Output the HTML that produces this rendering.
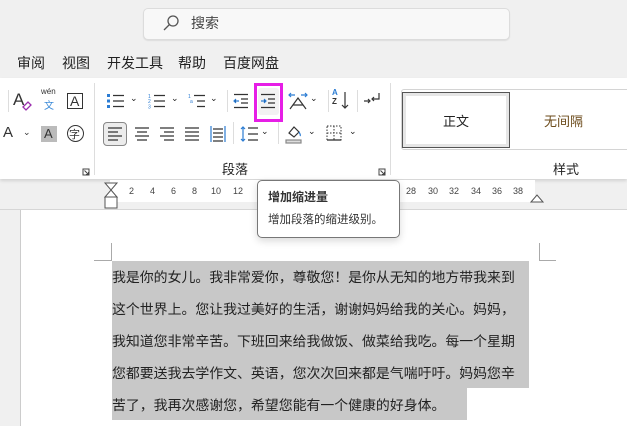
<!DOCTYPE html>
<html><head><meta charset="utf-8"><style>
*{margin:0;padding:0;box-sizing:border-box}
body{width:627px;height:426px;overflow:hidden;background:#f0f0f0;font-family:"Liberation Sans","Noto Sans CJK SC",sans-serif;position:relative;color:#222}
.a{position:absolute}
.t{font-size:13px;white-space:nowrap}
svg{position:absolute;overflow:visible}
</style></head><body>
<!-- search -->
<div class="a" style="left:143px;top:8px;width:367px;height:32px;background:#f8f8f8;border:1px solid #dcdcdc;border-radius:5px;box-shadow:0 1px 1px #ddd"></div>
<svg style="left:163px;top:14px" width="18" height="18"><circle cx="10" cy="7" r="5" fill="none" stroke="#555" stroke-width="1.3"/><line x1="6.5" y1="10.5" x2="1" y2="16" stroke="#555" stroke-width="1.3"/></svg>
<div class="a t" style="left:191px;top:13px;font-size:14px;color:#444">搜索</div>
<!-- menu -->
<div class="a t" style="left:17px;top:53px;font-size:14px">审阅</div>
<div class="a t" style="left:62px;top:53px;font-size:14px">视图</div>
<div class="a t" style="left:107px;top:53px;font-size:14px">开发工具</div>
<div class="a t" style="left:178px;top:53px;font-size:14px">帮助</div>
<div class="a t" style="left:223px;top:53px;font-size:14px">百度网盘</div>
<!-- ribbon -->
<div class="a" style="left:0;top:78px;width:627px;height:101px;background:#fff;box-shadow:0 2px 3px rgba(0,0,0,.12)"></div>
<div class="a" style="left:94px;top:83px;width:1px;height:92px;background:#ddd"></div>
<div class="a" style="left:390px;top:83px;width:1px;height:92px;background:#ddd"></div>
<div class="a" style="left:8px;top:90px;width:1px;height:22px;background:#ddd"></div>
<div class="a" style="left:227px;top:90px;width:1px;height:22px;background:#ddd"></div>
<div class="a" style="left:328px;top:90px;width:1px;height:22px;background:#ddd"></div>
<div class="a" style="left:357px;top:90px;width:1px;height:22px;background:#ddd"></div>
<div class="a" style="left:233px;top:122px;width:1px;height:22px;background:#ddd"></div>
<div class="a" style="left:278px;top:122px;width:1px;height:22px;background:#ddd"></div>
<!-- row1 left -->
<div class="a t" style="left:13px;top:90px;font-size:17px;color:#333">A</div>
<svg style="left:22px;top:100px" width="10" height="10"><path d="M1 7l5-5 3 3-5 5z" fill="none" stroke="#9b2fae" stroke-width="1.3"/></svg>
<div class="a t" style="left:41px;top:87px;font-size:8px;color:#333">wén</div>
<div class="a t" style="left:44px;top:97px;font-size:10px;color:#3b8ad8">文</div>
<div class="a" style="left:67px;top:93px;width:16px;height:16px;border:1px solid #333"></div>
<div class="a t" style="left:70px;top:93px;font-size:14px;color:#333">A</div>
<!-- row2 left -->
<div class="a t" style="left:3px;top:124px;font-size:15px;color:#333">A</div>
<div class="a t" style="left:23px;top:127px;font-size:9px;color:#333">⌄</div>
<div class="a" style="left:41px;top:126px;width:16px;height:16px;background:#bbb"></div>
<div class="a t" style="left:44px;top:126px;font-size:13px;color:#333">A</div>
<div class="a" style="left:67px;top:125px;width:17px;height:17px;border:1px solid #333;border-radius:50%"></div>
<div class="a t" style="left:69px;top:126px;font-size:11px;color:#333">字</div>
<!-- paragraph row1 -->
<svg style="left:106px;top:93px" width="20" height="16" stroke="#333" stroke-width="1.2"><rect x="1" y="1" width="3" height="3" fill="#2b7cd3" stroke="none"/><rect x="1" y="6.5" width="3" height="3" fill="#2b7cd3" stroke="none"/><rect x="1" y="12" width="3" height="3" fill="#2b7cd3" stroke="none"/><path d="M7 2.5h11M7 8h11M7 13.5h11"/></svg>
<div class="a t" style="left:130px;top:93px;font-size:9px">⌄</div>
<svg style="left:148px;top:93px" width="20" height="16" stroke="#333" stroke-width="1.2"><text x="0" y="5" font-size="5" fill="#2b7cd3" stroke="none">1</text><text x="0" y="10" font-size="5" fill="#2b7cd3" stroke="none">2</text><text x="0" y="15.5" font-size="5" fill="#2b7cd3" stroke="none">3</text><path d="M6 2.5h11M6 8h11M6 13.5h11"/></svg>
<div class="a t" style="left:171px;top:93px;font-size:9px">⌄</div>
<svg style="left:188px;top:93px" width="20" height="16" stroke="#333" stroke-width="1.2"><text x="0" y="5" font-size="5" fill="#2b7cd3" stroke="none">1</text><text x="2" y="10" font-size="5" fill="#2b7cd3" stroke="none">a</text><path d="M6 2.5h11M9 8h8M9 13.5h8"/></svg>
<div class="a t" style="left:210px;top:93px;font-size:9px">⌄</div>
<svg style="left:233px;top:93px" width="16" height="16" stroke="#333" stroke-width="1.2"><path d="M1 1.5h14M8 6h7M8 10h7M1 14.5h14"/><path d="M6 8H1M3 6l-2 2 2 2" stroke="#2b7cd3"/></svg>
<div class="a" style="left:254px;top:83px;width:29px;height:39px;border:3px solid #e61ee6"></div>
<div class="a" style="left:258px;top:88px;width:21px;height:27px;background:#f2f2f2;border-radius:3px"></div>
<svg style="left:260px;top:93px" width="16" height="16" stroke="#333" stroke-width="1.2"><path d="M1 1.5h14M8 6h7M8 10h7M1 14.5h14"/><path d="M1 8h5M4 6l2 2-2 2" stroke="#2b7cd3"/></svg>
<svg style="left:288px;top:92px" width="20" height="18" stroke="#333" stroke-width="1.2" fill="none"><path d="M2 17L10 6l8 11M5 13h10"/><path d="M1 3h6M3 1L1 3l2 2M13 3h6M17 1l2 2-2 2" stroke="#2b7cd3"/></svg>
<div class="a t" style="left:310px;top:93px;font-size:9px">⌄</div>
<div class="a t" style="left:332px;top:88px;font-size:8px;color:#2b7cd3;font-weight:bold">A</div>
<div class="a t" style="left:332px;top:97px;font-size:8px;color:#333;font-weight:bold">Z</div>
<svg style="left:341px;top:91px" width="8" height="18" stroke="#333" stroke-width="1.2" fill="none"><path d="M4 1v16M1 14l3 3 3-3"/></svg>
<svg style="left:363px;top:92px" width="18" height="16" stroke="#333" stroke-width="1.2" fill="none"><path d="M16 1v6H9M11 5l-2 2 2 2M1 9h6M5 7l2 2-2 2"/></svg>
<!-- paragraph row2 -->
<div class="a" style="left:103px;top:122px;width:24px;height:24px;background:#ececec;border:1px solid #888;border-radius:4px"></div>
<svg style="left:108px;top:127px" width="16" height="14" stroke="#333" stroke-width="1.2"><path d="M0 1h14M0 5h10M0 9h14M0 13h10"/></svg>
<svg style="left:135px;top:127px" width="16" height="14" stroke="#333" stroke-width="1.2"><path d="M0 1h14M2 5h10M0 9h14M2 13h10"/></svg>
<svg style="left:160px;top:127px" width="16" height="14" stroke="#333" stroke-width="1.2"><path d="M0 1h14M4 5h10M0 9h14M4 13h10"/></svg>
<svg style="left:185px;top:127px" width="16" height="14" stroke="#333" stroke-width="1.2"><path d="M0 1h14M0 5h14M0 9h14M0 13h14"/></svg>
<svg style="left:210px;top:125px" width="16" height="18" stroke="#333" stroke-width="1.2"><path d="M1 1v16M15 1v16" stroke="#2b7cd3"/><path d="M3 4h10M3 8h10M3 12h10M3 16h10"/></svg>
<svg style="left:240px;top:125px" width="20" height="18" stroke="#333" stroke-width="1.2" fill="none"><path d="M3 2v14M1 4l2-2 2 2M1 14l2 2 2-2" stroke="#2b7cd3"/><path d="M8 3h10M8 9h10M8 15h10"/></svg>
<div class="a t" style="left:261px;top:126px;font-size:9px">⌄</div>
<svg style="left:285px;top:124px" width="18" height="20" stroke="#333" stroke-width="1.2" fill="none"><path d="M4 9l5-6 5 5-5 5z"/><path d="M14 8c1 2 2 3 1 4" stroke="#2b7cd3"/><rect x="1" y="16" width="15" height="3" fill="#ddd" stroke="#888"/></svg>
<div class="a t" style="left:308px;top:126px;font-size:9px">⌄</div>
<svg style="left:326px;top:125px" width="16" height="16" stroke="#333" stroke-width="1" fill="none" stroke-dasharray="1.5 1.5"><rect x="1" y="1" width="14" height="14"/><path d="M8 1v14M1 8h14"/><path d="M1 15h14" stroke-dasharray="none" stroke-width="1.3"/></svg>
<div class="a t" style="left:349px;top:126px;font-size:9px">⌄</div>
<!-- labels -->
<div class="a t" style="left:222px;top:159px;font-size:13px">段落</div>
<div class="a t" style="left:553px;top:159px;font-size:13px">样式</div>
<svg style="left:82px;top:168px" width="8" height="8" stroke="#444" fill="none"><path d="M1 1h6v6H1zM2.5 2.5l4 4M6.5 4v2.5H4"/></svg>
<svg style="left:378px;top:168px" width="8" height="8" stroke="#444" fill="none"><path d="M1 1h6v6H1zM2.5 2.5l4 4M6.5 4v2.5H4"/></svg>
<!-- styles gallery -->
<div class="a" style="left:401px;top:89px;width:240px;height:61px;border:1px solid #d4d4d4;border-radius:3px"></div>
<div class="a" style="left:402px;top:92px;width:108px;height:56px;border:1px solid #555;background:#fff;box-shadow:inset 0 0 0 3px #e6e6e6"></div>
<div class="a t" style="left:443px;top:111px;font-size:13px">正文</div>
<div class="a t" style="left:544px;top:111px;font-size:13px;color:#6b4a1a">无间隔</div>
<!-- ruler -->
<div class="a" style="left:110px;top:180px;width:425px;height:22px;background:#fff"></div>
<div class="a" style="left:0;top:209px;width:627px;height:1px;background:#d6d6d6"></div>
<svg style="left:104px;top:182px" width="14" height="28" stroke="#555" fill="#fff"><path d="M1 1h12L7 8z M7 8l6 7H1z"/><rect x="1" y="15" width="12" height="11"/></svg>
<div class="a t" style="left:129px;top:186px;font-size:9px;color:#444">2</div>
<div class="a t" style="left:150px;top:186px;font-size:9px;color:#444">4</div>
<div class="a t" style="left:171px;top:186px;font-size:9px;color:#444">6</div>
<div class="a t" style="left:192px;top:186px;font-size:9px;color:#444">8</div>
<div class="a t" style="left:211px;top:186px;font-size:9px;color:#444">10</div>
<div class="a t" style="left:233px;top:186px;font-size:9px;color:#444">12</div>
<div class="a t" style="left:406px;top:186px;font-size:9px;color:#444">28</div>
<div class="a t" style="left:428px;top:186px;font-size:9px;color:#444">30</div>
<div class="a t" style="left:449px;top:186px;font-size:9px;color:#444">32</div>
<div class="a t" style="left:471px;top:186px;font-size:9px;color:#444">34</div>
<div class="a t" style="left:492px;top:186px;font-size:9px;color:#444">36</div>
<div class="a t" style="left:513px;top:186px;font-size:9px;color:#444">38</div>
<svg style="left:530px;top:193px" width="14" height="10" stroke="#555" fill="#fff"><path d="M1 9l6-7 6 7z"/></svg>
<!-- page -->
<div class="a" style="left:20px;top:210px;width:607px;height:216px;background:#fff;border-left:1px solid #ccc"></div>
<div class="a" style="left:111px;top:243px;width:1px;height:18px;background:#aaa"></div>
<div class="a" style="left:94px;top:260px;width:18px;height:1px;background:#aaa"></div>
<div class="a" style="left:539px;top:243px;width:1px;height:18px;background:#aaa"></div>
<div class="a" style="left:539px;top:260px;width:17px;height:1px;background:#aaa"></div>
<div class="a" style="left:112px;top:261px;width:417px;height:127px;background:#c8c8c8"></div>
<div class="a" style="left:112px;top:388px;width:355px;height:32px;background:#c8c8c8"></div>
<div class="a" style="left:112px;top:261px;width:430px;font-size:13.9px;line-height:32px;color:#222;white-space:nowrap">我是你的女儿。我非常爱你，尊敬您！是你从无知的地方带我来到<br>这个世界上。您让我过美好的生活，谢谢妈妈给我的关心。妈妈，<br>我知道您非常辛苦。下班回来给我做饭、做菜给我吃。每一个星期<br>您都要送我去学作文、英语，您次次回来都是气喘吁吁。妈妈您辛<br>苦了，我再次感谢您，希望您能有一个健康的好身体。</div>
<!-- tooltip -->
<div class="a" style="left:257px;top:180px;width:143px;height:58px;background:#fff;border:1px solid #777;border-radius:5px;box-shadow:0 3px 8px rgba(0,0,0,.15)"></div>
<div class="a t" style="left:268px;top:188px;font-size:12px;font-weight:bold;color:#333">增加缩进量</div>
<div class="a t" style="left:268px;top:211px;font-size:11.5px;color:#333">增加段落的缩进级别。</div>
</body></html>
